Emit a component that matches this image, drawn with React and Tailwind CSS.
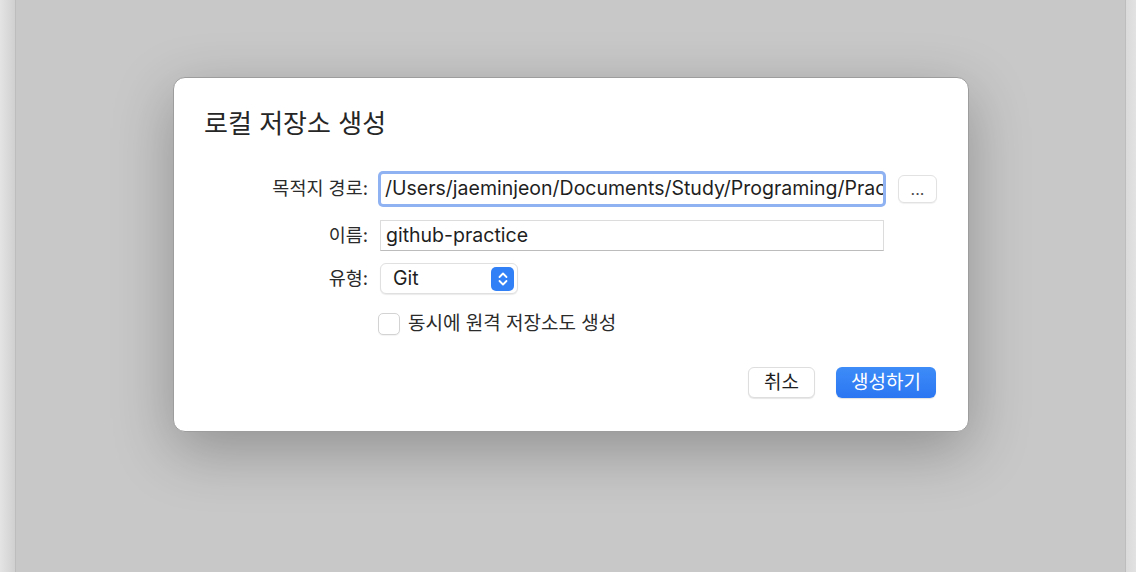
export default function App() {
  const font = { fontFamily: '"Inter", "Noto Sans CJK KR", sans-serif' };

  return (
    <div
      className="flex h-[572px] w-[1136px] overflow-hidden bg-[#c8c8c8]"
      style={font}
    >
      <div className="w-[16px] shrink-0 border-r border-[#bdbdbd] bg-gradient-to-r from-[#e4e4e4] to-[#d0d0d0]" />

      <div className="relative flex-1">
        <div className="ml-[157px] mt-[77px] flex h-[355px] w-[796px] flex-col rounded-[12px] border border-[#9d9d9d] bg-white shadow-[0_18px_60px_rgba(0,0,0,0.28)]">
          <h1 className="ml-[30px] mt-[31px] text-[26px] leading-[30px] text-[#262626]">
            로컬 저장소 생성
          </h1>

          <div className="mt-[32px] grid grid-cols-[194px_1fr] items-center gap-x-[10px]">
            <label className="text-right text-[18.5px] text-[#2b2b2b]">
              목적지 경로:
            </label>
            <div className="flex items-center">
              <div className="rounded-[5px] bg-[#8fb2f2] p-[3px]">
                <div className="flex h-[30px] w-[502px] items-center overflow-hidden rounded-[2px] bg-white pl-[4px] text-[19.5px] text-[#1f1f1f] whitespace-nowrap">
                  /Users/jaeminjeon/Documents/Study/Programing/Prac
                </div>
              </div>
              <button className="ml-[12px] flex h-[28px] w-[39px] items-start justify-center rounded-[6px] border border-[#e2e2e2] bg-white pt-[3px] text-[16px] leading-[20px] text-[#4a4a4a] shadow-[0_1px_1px_rgba(0,0,0,0.06)]">
                ...
              </button>
            </div>

            <label className="mt-[13px] text-right text-[18.5px] text-[#2b2b2b]">
              이름:
            </label>
            <div className="ml-[2px] mt-[13px] flex h-[31px] w-[504px] items-center border border-[#dcdcdc] border-b-[#bcbcbc] bg-white pl-[5px] text-[19.5px] text-[#1f1f1f]">
              github-practice
            </div>

            <label className="mt-[13px] text-right text-[18.5px] text-[#2b2b2b]">
              유형:
            </label>
            <div className="ml-[2px] mt-[12px] flex h-[31px] w-[138px] items-center justify-between rounded-[6px] border border-[#e0e0e0] bg-white pl-[12px] pr-[3px] text-[19.5px] text-[#1f1f1f] shadow-[0_1px_1px_rgba(0,0,0,0.08)]">
              <span>Git</span>
              <span className="flex h-[24px] w-[23px] items-center justify-center rounded-[5px] bg-[#3280f6]">
                <svg width="12" height="18" viewBox="0 0 12 18" fill="none">
                  <path
                    d="M2.5 7 L6 3.5 L9.5 7"
                    stroke="white"
                    strokeWidth="1.8"
                    strokeLinecap="round"
                    strokeLinejoin="round"
                  />
                  <path
                    d="M2.5 11 L6 14.5 L9.5 11"
                    stroke="white"
                    strokeWidth="1.8"
                    strokeLinecap="round"
                    strokeLinejoin="round"
                  />
                </svg>
              </span>
            </div>

            <div />
            <div className="mt-[19px] flex h-[22px] items-center">
              <span className="h-[22px] w-[22px] rounded-[5px] border border-[#d3d3d3] bg-white shadow-[0_1px_1px_rgba(0,0,0,0.05)]" />
              <span className="ml-[8px] text-[19px] leading-[22px] text-[#2b2b2b]">
                동시에 원격 저장소도 생성
              </span>
            </div>
          </div>

          <div className="mr-[32px] mt-[32px] flex justify-end gap-[21px]">
            <button className="h-[31px] w-[67px] rounded-[6px] border border-[#dedede] bg-white text-[19px] leading-[28px] text-[#1f1f1f] shadow-[0_1px_1px_rgba(0,0,0,0.1)]">
              취소
            </button>
            <button className="h-[31px] w-[100px] rounded-[6px] bg-gradient-to-b from-[#3d8cf8] to-[#2b76f2] text-[19px] leading-[28px] text-white shadow-[0_1px_1px_rgba(0,0,0,0.12)]">
              생성하기
            </button>
          </div>
        </div>
      </div>

      <div className="w-[11px] shrink-0 border-l border-[#bdbdbd] bg-gradient-to-r from-[#dadada] to-[#e2e2e2]" />
    </div>
  );
}
